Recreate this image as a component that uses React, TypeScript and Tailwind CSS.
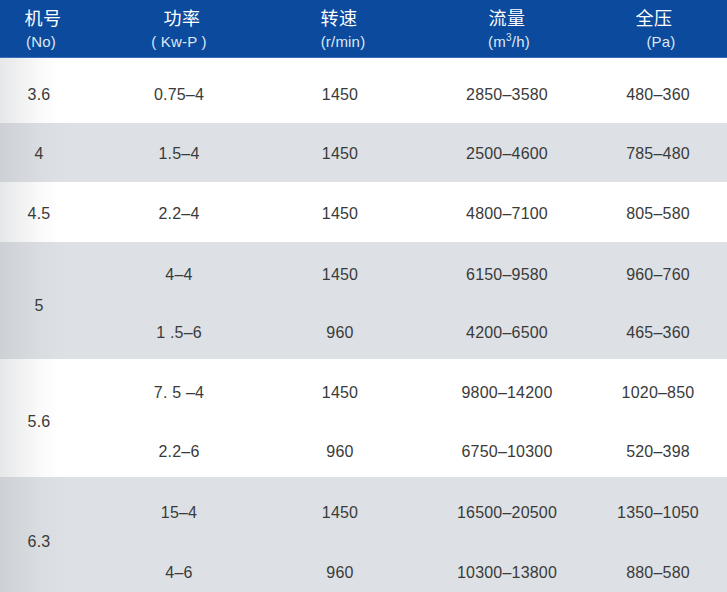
import React from "react";

type Sub = { p: string; r: string; q: string; h: string };

const COLS = "grid grid-cols-[202px_120px_214px_88px_1fr] items-center";

function Cells({ s, cls }: { s: Sub; cls: string }) {
  return (
    <div className={`${COLS} ${cls}`}>
      <div className="text-center">{s.p}</div>
      <div className="text-center">{s.r}</div>
      <div className="text-center">{s.q}</div>
      <div className="text-center">{s.h}</div>
      <div />
    </div>
  );
}

function Row({
  no,
  subs,
  rowCls,
  noCls,
  subCls,
}: {
  no: string;
  subs: Sub[];
  rowCls: string;
  noCls: string;
  subCls: string;
}) {
  return (
    <div className={`flex ${rowCls}`}>
      <div className={`w-[78px] shrink-0 flex items-center justify-center ${noCls}`}>{no}</div>
      <div className="flex-1 flex flex-col">
        {subs.map((s, i) => (
          <Cells key={i} s={s} cls={subCls} />
        ))}
      </div>
    </div>
  );
}

const WHITE = "bg-[linear-gradient(to_right,#e6e7e8_0px,#fafafa_40px,#ffffff_60px)]";
const GRAY = "bg-[linear-gradient(to_right,#cdd1d5_0px,#d9dde1_40px,#dde1e5_70px)]";
const CJK = { fontFamily: '"Noto Sans CJK SC", sans-serif' };

export default function App() {
  return (
    <div
      className="w-[727px] h-[592px] overflow-hidden bg-white text-[16px] tracking-[0.2px] text-[#3a3a3a]"
      style={{ fontFamily: '"Liberation Sans", Arial, "Noto Sans CJK SC", sans-serif' }}
    >
      {/* Header */}
      <div className="h-[58px] bg-[#0b4a9c] border-b border-[#3b6db5] text-white flex">
        <div className="w-[78px] shrink-0 flex flex-col items-center pt-[4px] pl-[8px]">
          <div className="text-[18px] leading-[26px] tracking-[0.5px]" style={CJK}>机号</div>
          <div className="text-[15px] leading-[20px] mt-[2px] text-[#dfe7f3] pr-[4px]">(No)</div>
        </div>
        <div className={`flex-1 ${COLS} items-start pt-[4px]`}>
          <div className="flex flex-col items-center">
            <div className="text-[18px] leading-[26px] tracking-[0.5px] pl-[6px]" style={CJK}>功率</div>
            <div className="text-[15px] leading-[20px] mt-[2px] text-[#dfe7f3]">( Kw-P )</div>
          </div>
          <div className="flex flex-col items-center">
            <div className="text-[18px] leading-[26px] tracking-[0.5px] pr-[2px]" style={CJK}>转速</div>
            <div className="text-[15px] leading-[20px] mt-[2px] text-[#dfe7f3] pl-[6px]">(r/min)</div>
          </div>
          <div className="flex flex-col items-center">
            <div className="text-[18px] leading-[26px] tracking-[0.5px]" style={CJK}>流量</div>
            <div className="text-[15px] leading-[20px] mt-[2px] text-[#dfe7f3] pl-[4px]">
              (m<span className="text-[10px] relative -top-[6px]">3</span>/h)
            </div>
          </div>
          <div className="flex flex-col items-center">
            <div className="text-[18px] leading-[26px] tracking-[0.5px] pr-[8px]" style={CJK}>全压</div>
            <div className="text-[15px] leading-[20px] mt-[2px] text-[#dfe7f3] pl-[6px]">(Pa)</div>
          </div>
          <div />
        </div>
      </div>

      <Row
        no="3.6"
        rowCls={`h-[65px] ${WHITE}`}
        noCls="pt-[9px]"
        subCls="h-[65px] pt-[9px]"
        subs={[{ p: "0.75–4", r: "1450", q: "2850–3580", h: "480–360" }]}
      />
      <Row
        no="4"
        rowCls={`h-[59px] ${GRAY}`}
        noCls="pt-[3px]"
        subCls="h-[59px] pt-[3px]"
        subs={[{ p: "1.5–4", r: "1450", q: "2500–4600", h: "785–480" }]}
      />
      <Row
        no="4.5"
        rowCls={`h-[60px] ${WHITE}`}
        noCls="pt-[3px]"
        subCls="h-[60px] pt-[3px]"
        subs={[{ p: "2.2–4", r: "1450", q: "4800–7100", h: "805–580" }]}
      />
      <Row
        no="5"
        rowCls={`h-[117px] ${GRAY}`}
        noCls="pt-[10px]"
        subCls="h-[58.5px] pt-[7px]"
        subs={[
          { p: "4–4", r: "1450", q: "6150–9580", h: "960–760" },
          { p: "1 .5–6", r: "960", q: "4200–6500", h: "465–360" },
        ]}
      />
      <Row
        no="5.6"
        rowCls={`h-[118px] ${WHITE}`}
        noCls="pt-[8px]"
        subCls="h-[59px] pt-[8px]"
        subs={[
          { p: "7. 5 –4", r: "1450", q: "9800–14200", h: "1020–850" },
          { p: "2.2–6", r: "960", q: "6750–10300", h: "520–398" },
        ]}
      />
      <Row
        no="6.3"
        rowCls={`h-[120px] ${GRAY}`}
        noCls="pt-[10px]"
        subCls="h-[60px] pt-[12px]"
        subs={[
          { p: "15–4", r: "1450", q: "16500–20500", h: "1350–1050" },
          { p: "4–6", r: "960", q: "10300–13800", h: "880–580" },
        ]}
      />
    </div>
  );
}
